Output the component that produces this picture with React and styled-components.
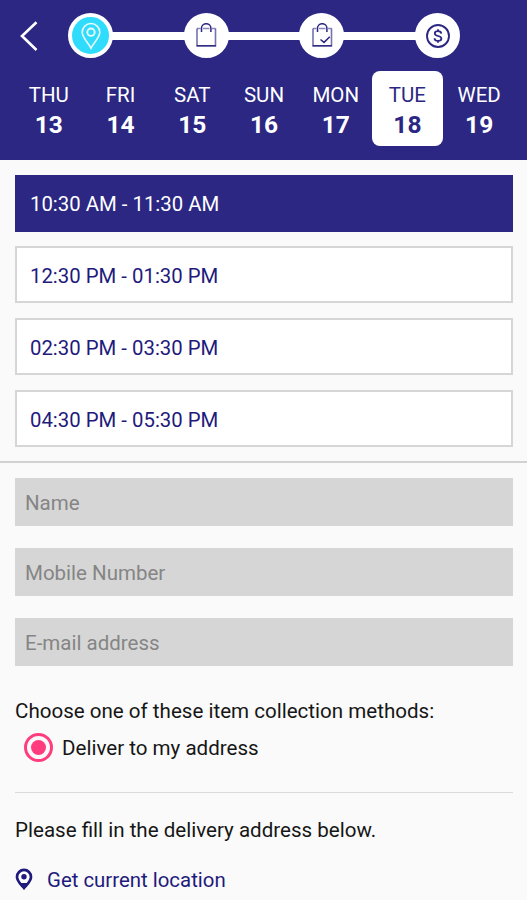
import React, { useState } from "react";
import styled, { createGlobalStyle } from "styled-components";

const days = [
    { name: "THU", date: 13 },
    { name: "FRI", date: 14 },
    { name: "SAT", date: 15 },
    { name: "SUN", date: 16 },
    { name: "MON", date: 17 },
    { name: "TUE", date: 18 },
    { name: "WED", date: 19 },
];

const slots = [
    "10:30 AM - 11:30 AM",
    "12:30 PM - 01:30 PM",
    "02:30 PM - 03:30 PM",
    "04:30 PM - 05:30 PM",
];

const PinIcon = () => (
    <svg width="22" height="28" viewBox="0 0 22 28" fill="none" stroke="#e8fcff" strokeWidth="1.6">
        <path d="M11 26.2C8.6 21 2.2 15.6 2.2 10.3a8.8 8.8 0 0 1 17.6 0C19.8 15.6 13.4 21 11 26.2z" />
        <circle cx="11" cy="10.2" r="3.7" strokeWidth="1.9" />
    </svg>
);

const BagIcon = ({ checked }) => (
    <svg width="22" height="26" viewBox="0 0 22 26" fill="none" stroke="#2b2783">
        <path d="M2 5.5V22.7H20.5V5.5" strokeWidth="1.6" opacity="0.65" />
        <path d="M2 5.5H5.5M8 5.5H14.5M17 5.5H20.5" strokeWidth="1.3" opacity="0.55" />
        <path d="M1.6 22.8H20.9" strokeWidth="1.4" />
        <path d="M6.5 9V5a4.7 4.3 0 0 1 9.4 0V9" strokeWidth="1.5" />
        {checked && <path d="M9.5 16.5L13 19.4L18.8 13.8" strokeWidth="1.5" />}
    </svg>
);

const DollarIcon = () => (
    <svg width="26" height="26" viewBox="0 0 26 26" fill="none" stroke="#2b2783">
        <circle cx="13" cy="13" r="11" strokeWidth="1.9" />
        <path d="M16.3 10.6C16.1 8.9 14.9 8.2 13 8.2c-1.9 0-3.2.9-3.2 2.3 0 3.3 6.6 1.7 6.6 5 0 1.5-1.4 2.4-3.4 2.4-2.1 0-3.4-.9-3.5-2.7M13 6.3V8.2M13 17.9v1.9" strokeWidth="1.8" />
    </svg>
);

const BookingDetails = () => {
    const [selectedDate, setSelectedDate] = useState(18);
    const [selectedSlot, setSelectedSlot] = useState(slots[0]);

    return (
        <Page>
            <GlobalStyle />
            <Header>
                <StepBar>
                    <BackButton aria-label="Back">
                        <svg width="20" height="34" viewBox="0 0 20 34" fill="none" stroke="#fff" strokeWidth="2.6">
                            <path d="M17.5 3.2L3 17L17.5 31" />
                        </svg>
                    </BackButton>
                    <Step $active><PinIcon /></Step>
                    <StepLine />
                    <Step><BagIcon /></Step>
                    <StepLine />
                    <Step><BagIcon checked /></Step>
                    <StepLine />
                    <Step><DollarIcon /></Step>
                </StepBar>
                <DayRow>
                    {days.map(day => (
                        <Day
                            key={day.date}
                            $selected={day.date === selectedDate}
                            onClick={() => setSelectedDate(day.date)}
                        >
                            <DayName>{day.name}</DayName>
                            <DayDate>{day.date}</DayDate>
                        </Day>
                    ))}
                </DayRow>
            </Header>

            <SlotList>
                {slots.map(slot => (
                    <Slot
                        key={slot}
                        $selected={slot === selectedSlot}
                        onClick={() => setSelectedSlot(slot)}
                    >
                        {slot}
                    </Slot>
                ))}
            </SlotList>

            <Form>
                <Input type="text" placeholder="Name" />
                <Input type="tel" placeholder="Mobile Number" />
                <Input type="email" placeholder="E-mail address" />
            </Form>

            <Collection>
                <Text>Choose one of these item collection methods:</Text>
                <RadioRow>
                    <Radio />
                    <Text>Deliver to my address</Text>
                </RadioRow>
            </Collection>

            <Address>
                <Text>Please fill in the delivery address below.</Text>
                <LocationLink>
                    <svg width="18" height="24" viewBox="0 0 18 24">
                        <path d="M9 1.9a7 7 0 0 1 7 7C16 13.2 11.5 17 9 20C6.5 17 2 13.2 2 8.9A7 7 0 0 1 9 1.9z" fill="#fff" stroke="#1f1a7c" strokeWidth="2.7" />
                        <path d="M4.5 15L9 21.5L13.5 15z" fill="#1f1a7c" />
                        <circle cx="9" cy="8.8" r="2.7" fill="#1f1a7c" />
                    </svg>
                    Get current location
                </LocationLink>
            </Address>
        </Page>
    );
};

/* Styled Components */
const GlobalStyle = createGlobalStyle`
    * { box-sizing: border-box; }
    body {
        margin: 0;
        background: #fafafa;
        font-family: Roboto, sans-serif;
    }
`;

const Page = styled.div`
    width: 527px;
    height: 900px;
    overflow: hidden;
    background: #fafafa;
    font-size: 20.5px;
`;

const Header = styled.div`
    height: 159.5px;
    background: #2b2783;
`;

const StepBar = styled.div`
    display: flex;
    align-items: center;
    height: 71px;
    padding: 0 67px 0 19px;
`;

const BackButton = styled.button`
    width: 49px;
    padding: 0;
    border: none;
    background: none;
    display: flex;
    cursor: pointer;
`;

const Step = styled.div`
    flex: none;
    width: 45px;
    height: 45px;
    border-radius: 50%;
    border: 4.5px solid #fff;
    background: ${({ $active }) => ($active ? "#2fdcfb" : "#fff")};
    display: flex;
    align-items: center;
    justify-content: center;
`;

const StepLine = styled.div`
    flex: 1;
    height: 8px;
    margin: 0 -1px;
    background: #fff;
`;

const DayRow = styled.div`
    display: grid;
    grid-template-columns: repeat(7, 1fr);
    height: 75px;
    padding: 0 12px 0 13px;
`;

const Day = styled.div`
    display: flex;
    flex-direction: column;
    align-items: center;
    padding-top: 11px;
    border-radius: 8px;
    cursor: pointer;
    color: ${({ $selected }) => ($selected ? "#2b2783" : "#fff")};
    background: ${({ $selected }) => ($selected ? "#fff" : "transparent")};
`;

const DayName = styled.div`
    line-height: 26px;
`;

const DayDate = styled.div`
    font-size: 24.5px;
    font-weight: 700;
    line-height: 34px;
`;

const SlotList = styled.div`
    display: grid;
    grid-template-rows: repeat(4, 57px);
    gap: 14.8px;
    padding: 15px 14px 14.2px 15px;
    border-bottom: 2px solid #d2d2d2;
`;

const Slot = styled.div`
    display: flex;
    align-items: center;
    padding: 2.4px 13px 0;
    font-size: 20.35px;
    cursor: pointer;
    border: 2px solid ${({ $selected }) => ($selected ? "#2b2783" : "#d6d6d6")};
    color: ${({ $selected }) => ($selected ? "#fff" : "#1f1a7c")};
    background: ${({ $selected }) => ($selected ? "#2b2783" : "#fff")};
`;

const Form = styled.form`
    display: grid;
    grid-template-rows: repeat(3, 48.5px);
    gap: 21.7px;
    padding: 14.5px 14px 0 15px;
`;

const Input = styled.input`
    width: 100%;
    padding: 2px 10px 0;
    border: none;
    border-radius: 0;
    background: #d6d6d6;
    font: inherit;

    &::placeholder {
        color: #858585;
        opacity: 1;
    }
`;

const Collection = styled.div`
    margin: 31.7px 14px 0 15px;
    padding-bottom: 29.5px;
    border-bottom: 1px solid #dadada;
`;

const Text = styled.div`
    color: #161616;
    font-size: 20.57px;
    line-height: 26px;
`;

const RadioRow = styled.div`
    display: flex;
    align-items: center;
    gap: 9px;
    margin-top: 8.8px;
    padding-left: 9px;
    height: 30px;
`;

const Radio = styled.div`
    display: grid;
    place-items: center;
    width: 29px;
    height: 29px;
    border: 3px solid #ff3c7d;
    border-radius: 50%;

    &::after {
        content: "";
        width: 15px;
        height: 15px;
        border-radius: 50%;
        background: #ff3c7d;
    }
`;

const Address = styled.div`
    padding: 23.3px 15px 0;
`;

const LocationLink = styled.div`
    display: flex;
    align-items: center;
    gap: 14px;
    margin-top: 24px;
    font-size: 20.4px;
    line-height: 26px;
    color: #1f1a7c;
    cursor: pointer;
`;

export default BookingDetails;
